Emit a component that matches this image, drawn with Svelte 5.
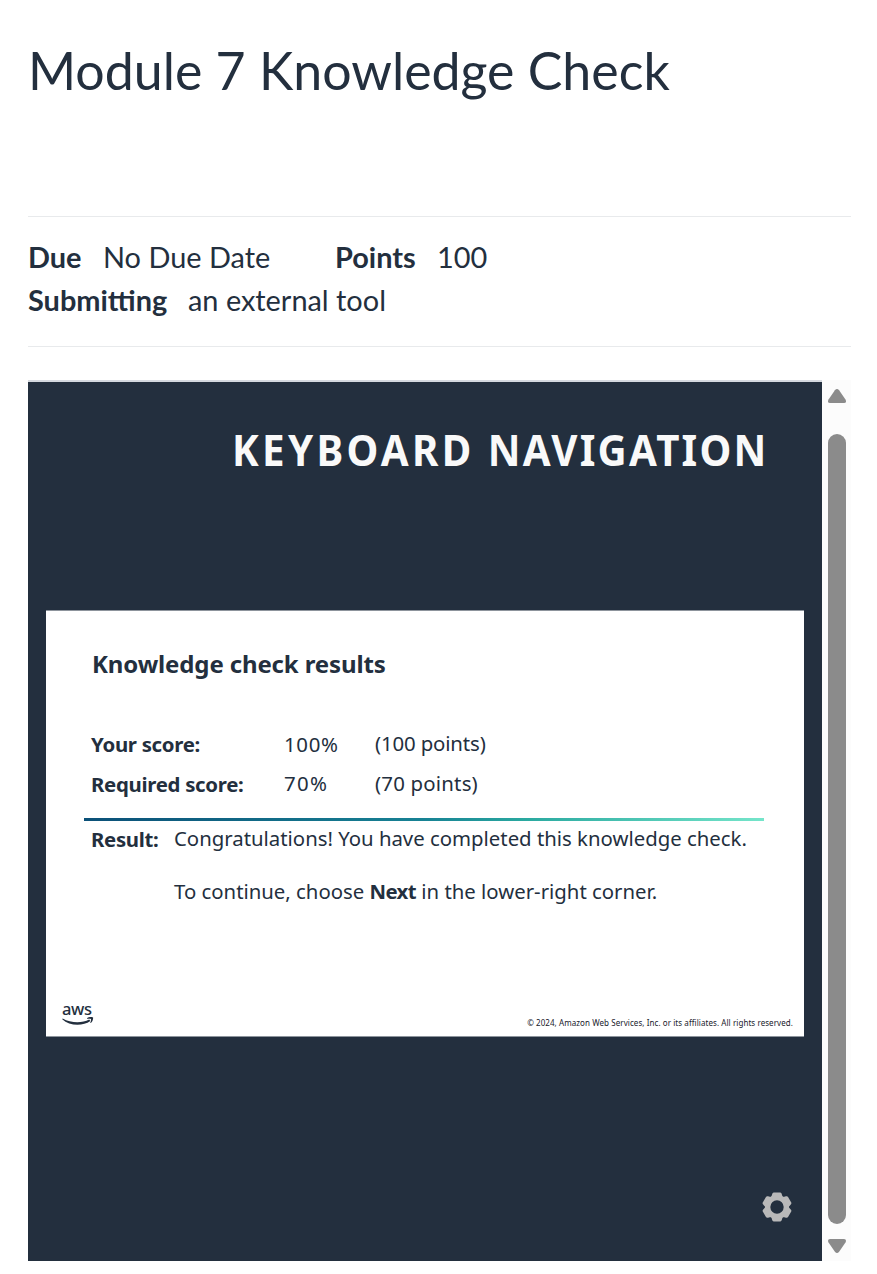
<script>
  const scores = [
    { label: 'Your score:', percent: '100%', points: '(100 points)' },
    { label: 'Required score:', percent: '70%', points: '(70 points)' }
  ];
</script>

<main>
  <h1>Module 7 Knowledge Check</h1>
  <section class="details">
    <div class="row">
      <b class="due">Due</b><span class="date">No Due Date</span>
      <b class="pts">Points</b><span class="num">100</span>
    </div>
    <div class="row">
      <b class="sub">Submitting</b><span class="tool">an external tool</span>
    </div>
  </section>

  <section class="frame">
    <div class="player">
      <h2><span><i>KEYBOARD</i> <em>NAVIGATION</em></span></h2>
      <article class="slide">
        <h3>Knowledge check results</h3>
        <div class="scores">
          {#each scores as s, i}
            <b>{s.label}</b>
            <span class="percent p{i}">{s.percent}</span>
            <span class="points q{i}">{s.points}</span>
          {/each}
        </div>
        <div class="rule"></div>
        <div class="result">
          <b>Result:</b>
          <div class="message">
            <p>Congratulations! You have completed this knowledge check.</p>
            <p class="next">To continue, choose <b>Next</b> in the lower-right corner.</p>
          </div>
        </div>
        <footer>
          <div class="aws">
            <span>aws</span>
            <svg width="32" height="9" viewBox="0 0 32 9">
              <path d="M.7 1.4C8.5 6 19.5 6.5 27.2 2.6l1.2 1.3C20.5 9.4 7.6 9 .2 2.2Z" fill="#232f3e" />
              <path d="M25.2 1c2-1.3 4.7-1.3 5.9-.6.2 1.8-.6 4.2-2.3 5.6l-.6-.2c.7-1.5 1.1-2.9.7-3.7-.6-.6-2.1-.4-3.7-.2Z" fill="#232f3e" />
            </svg>
          </div>
          <small>© 2024, Amazon Web Services, Inc. or its affiliates. All rights reserved.</small>
        </footer>
      </article>
      <button aria-label="Settings">
        <svg width="30" height="30" viewBox="-15 -15 30 30">
          <circle r="9.2" fill="none" stroke="#b9b9b9" stroke-width="5" />
          {#each [0, 60, 120, 180, 240, 300] as angle}
            <path transform="rotate({angle})" d="M-6.6-9.6C-4.6-10.6-5.4-14.6-3.2-14.6H3.2C5.4-14.6 4.6-10.6 6.6-9.6L3.6-7.4H-3.6Z" fill="#b9b9b9" />
          {/each}
        </svg>
      </button>
    </div>
    <div class="scrollbar">
      <svg width="18" height="14" viewBox="0 0 18 14"><path d="M6.9 1.2Q9-1.2 11.1 1.2L17.5 10.5Q19 14 16 14H2Q-1 14 .5 10.5Z" fill="#8b8b8b" /></svg>
      <div class="thumb"></div>
      <svg width="18" height="14" viewBox="0 0 18 14"><path d="M6.9 12.8Q9 15.2 11.1 12.8L17.5 3.5Q19 0 16 0H2Q-1 0 .5 3.5Z" fill="#8b8b8b" /></svg>
    </div>
  </section>
</main>

<style>
  :global(body) { margin: 0; background: #fff; }
  main { width: 823px; height: 1274px; padding-left: 28px; font-family: Lato, sans-serif; color: #232f3e; overflow: hidden; }
  h1 { margin: 0; padding-top: 39px; height: 177px; font-size: 51.85px; line-height: 63px; font-weight: 400; white-space: nowrap; }
  .details { height: 100px; border: solid #e8eaec; border-width: 1px 0; padding: 18px 0 11px; font-size: 28.9px; line-height: 43px; }
  .row { display: flex; height: 43px; white-space: nowrap; }
  .due { width: 75px; }
  .date { width: 232px; }
  .pts { width: 102px; }
  .sub { width: 160px; }
  .frame { display: flex; margin-top: 33px; height: 881px; background: #fcfcfc; }
  .player { width: 794px; box-sizing: border-box; border-top: 2px solid #d5d9df; background: #232f3e; font-family: "Noto Sans", sans-serif; display: flex; flex-direction: column; }
  h2 { margin: 0; height: 228px; padding: 38px 54px 0 0; box-sizing: border-box; text-align: right; font-size: 43px; line-height: 60px; color: #f9f9f9; white-space: nowrap; letter-spacing: 3px; }
  h2 span { display: inline-block; transform: scaleX(.937); transform-origin: right; }
  h2 i, h2 em { font-style: normal; }
  h2 i { letter-spacing: 3.5px; }
  h2 em { letter-spacing: 2.35px; }
  .slide { margin: 0 18px; height: 427px; background: #fff; box-sizing: border-box; border: solid #8d949c; border-width: 1px 0; white-space: nowrap; display: flex; flex-direction: column; }
  h3 { margin: 0; padding: 35px 0 0 46px; height: 79px; box-sizing: border-box; font-size: 24px; line-height: 36px; letter-spacing: -.13px; }
  .scores { display: grid; grid-template-columns: 193px 91px auto; grid-auto-rows: 39.5px; padding: 34px 0 0 45px; height: 128px; box-sizing: border-box; font-size: 20.4px; line-height: 40px; }
  .scores b, .result b { letter-spacing: -.3px; }
  .percent { letter-spacing: .7px; }
  .p1 { letter-spacing: 1.3px; }
  .p1, .q0, .q1 { margin-top: -1px; }
  .q0 { letter-spacing: -.15px; }
  .q1 { letter-spacing: .2px; }
  .rule { margin: 0 40px 0 38px; height: 3px; background: linear-gradient(90deg, #0b5078, #178294 50%, #2aa9a0 65%, #75e5ca); }
  .result { display: grid; grid-template-columns: 83px auto; margin-top: -1px; padding-left: 45px; font-size: 20.35px; line-height: 36px; }
  .result > b { padding-top: 1px; }
  p { margin: 0; }
  .next { margin-top: 17px; }
  .next b { letter-spacing: -.6px; }
  footer { margin-top: auto; display: flex; justify-content: space-between; align-items: flex-end; padding: 0 11px 5px 16px; }
  .aws { display: flex; flex-direction: column; height: 33px; width: 32px; }
  .aws span { font-size: 16.5px; line-height: 22px; height: 19px; letter-spacing: -.4px; font-weight: 500; }
  small { font-size: 8px; line-height: 16px; letter-spacing: .07px; color: #17202b; }
  button { all: unset; margin: auto 30px 39px auto; height: 30px; }
  button svg { display: block; }
  .scrollbar { width: 29px; display: flex; flex-direction: column; padding: 9px 0 0 6px; box-sizing: border-box; }
  .scrollbar svg { display: block; }
  .thumb { width: 18px; height: 790px; border-radius: 9px; background: #8b8b8b; margin: 31px 0 15px; flex: none; }
</style>
